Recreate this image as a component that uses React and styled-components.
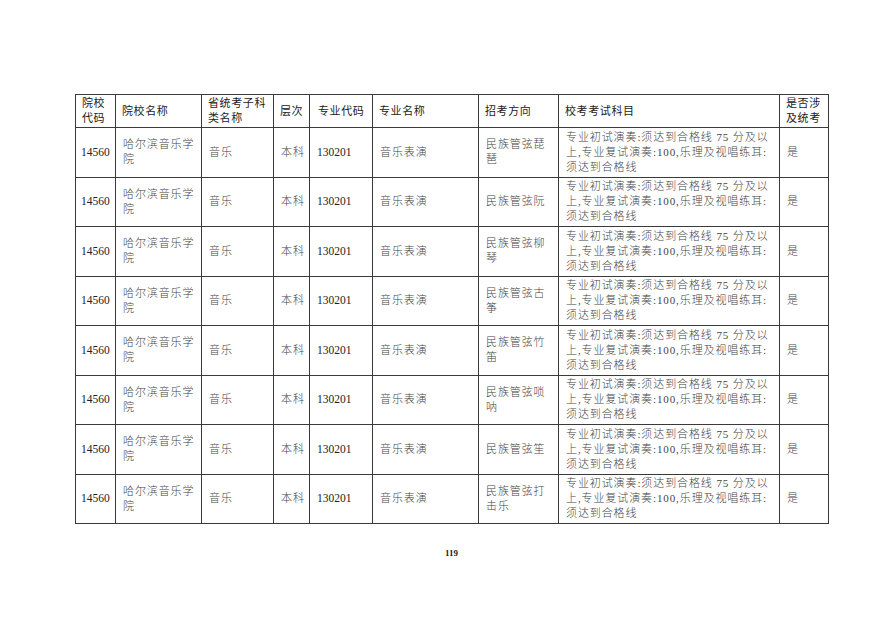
import React from 'react';
import styled, { createGlobalStyle } from 'styled-components';

const GlobalStyle = createGlobalStyle`
  html, body {
    margin: 0;
    padding: 0;
    background: #ffffff;
  }
`;

const Page = styled.div`
  width: 880px;
  height: 622px;
  box-sizing: border-box;
  padding: 94px 0 0 75px;
  background: #fff;
  font-family: "Liberation Serif", "Noto Sans CJK SC", serif;
  color: #2b2b2b;
`;

const Table = styled.table`
  border-collapse: collapse;
  table-layout: fixed;
  width: 753px;
  font-size: 11px;
  line-height: 15px;
`;

const HeadCell = styled.th`
  border: 1px solid #3a3a3a;
  height: 32px;
  padding: 0 0 0 ${({ pad }) => pad || 6}px;
  text-align: left;
  font-weight: 400;
  vertical-align: middle;
  letter-spacing: 0.6px;
  color: #222;
`;

const Cell = styled.td`
  border: 1px solid #3a3a3a;
  height: 48.5px;
  padding: 0 0 0 ${({ pad }) => pad || 6}px;
  vertical-align: middle;
  font-weight: ${({ num }) => (num ? 400 : 300)};
  font-size: ${({ num }) => (num ? '11.5px' : '11px')};
  letter-spacing: ${({ num }) => (num ? '0' : '0.9px')};
  color: ${({ num }) => (num ? '#222' : '#444')};
`;

const Line = styled.span`
  display: block;
  white-space: nowrap;
`;

const PageNumber = styled.div`
  width: 753px;
  margin-top: 24px;
  text-align: center;
  font-family: "Liberation Serif", serif;
  font-weight: bold;
  font-size: 9px;
  color: #222;
`;

const columns = [40, 86, 72, 36, 63, 106, 80, 221, 49];

const headers = [
  ['院校', '代码'],
  ['院校名称'],
  ['省统考子科', '类名称'],
  ['层次'],
  ['专业代码'],
  ['专业名称'],
  ['招考方向'],
  ['校考考试科目'],
  ['是否涉', '及统考'],
];

const directions = [
  ['民族管弦琵', '琶'],
  ['民族管弦阮'],
  ['民族管弦柳', '琴'],
  ['民族管弦古', '筝'],
  ['民族管弦竹', '笛'],
  ['民族管弦唢', '呐'],
  ['民族管弦笙'],
  ['民族管弦打', '击乐'],
];

const exam = ['专业初试演奏:须达到合格线 75 分及以', '上,专业复试演奏:100,乐理及视唱练耳:', '须达到合格线'];

const Lines = ({ items }) => items.map((t, i) => <Line key={i}>{t}</Line>);

export default function App() {
  return (
    <Page>
      <GlobalStyle />
      <Table>
        <colgroup>
          {columns.map((w, i) => <col key={i} style={{ width: w }} />)}
        </colgroup>
        <thead>
          <tr>
            {headers.map((h, i) => (
              <HeadCell key={i} pad={i === 4 ? 8 : 6}>
                <Lines items={h} />
              </HeadCell>
            ))}
          </tr>
        </thead>
        <tbody>
          {directions.map((d, i) => (
            <tr key={i}>
              <Cell num pad={5}>14560</Cell>
              <Cell pad={7}><Lines items={['哈尔滨音乐学', '院']} /></Cell>
              <Cell pad={7}>音乐</Cell>
              <Cell pad={7}>本科</Cell>
              <Cell num pad={7}>130201</Cell>
              <Cell pad={7}>音乐表演</Cell>
              <Cell pad={7}><Lines items={d} /></Cell>
              <Cell pad={7}><Lines items={exam} /></Cell>
              <Cell pad={7}>是</Cell>
            </tr>
          ))}
        </tbody>
      </Table>
      <PageNumber>119</PageNumber>
    </Page>
  );
}
